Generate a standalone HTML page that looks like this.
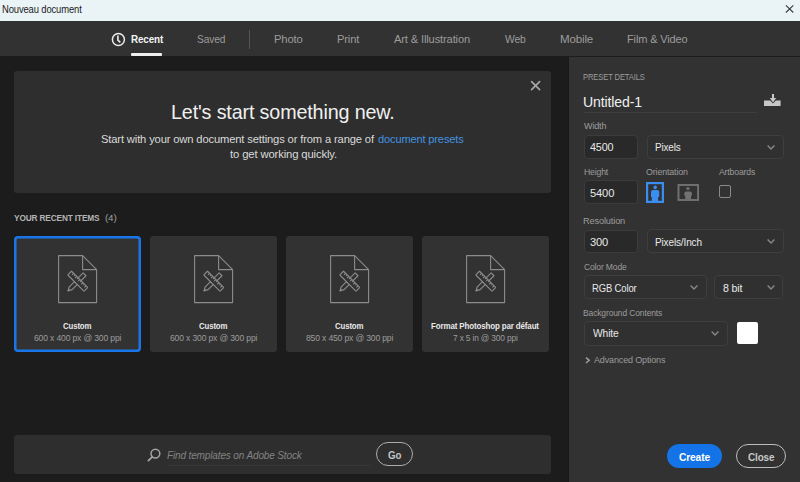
<!DOCTYPE html>
<html><head><meta charset="utf-8">
<style>
*{margin:0;padding:0;box-sizing:border-box}
html,body{width:800px;height:482px;overflow:hidden;background:#1c1c1c;font-family:"Liberation Sans",sans-serif}
.abs{position:absolute}
.t{position:absolute;white-space:nowrap;line-height:1;transform-origin:0 0}
#title{left:0;top:0;width:800px;height:21px;background:#eaf3f6}
#tabs{left:0;top:21px;width:800px;height:35px;background:#323232}
#tabline{left:0;top:56px;width:800px;height:1px;background:#1d1d1d}
#main{left:14px;top:71px;width:536.5px;height:121.8px;background:#2e2e2e;border-radius:3px}
#panel{left:569px;top:57px;width:231px;height:425px;background:#323232}
.inp{position:absolute;background:#292929;border:1px solid #3c3c3c;border-radius:4px}
.dd{position:absolute;background:#303030;border:1px solid #3e3e3e;border-radius:4px}
.card{position:absolute;top:236px;width:126.6px;height:115.6px;background:#323232;border-radius:3px}
.doc{position:absolute;top:255px}
.chev{position:absolute}
</style></head><body>
<svg width="0" height="0" style="position:absolute">
 <defs>
  <symbol id="docic" viewBox="0 0 40 49">
   <g fill="none" stroke="#8c8c8c" stroke-width="1.1" stroke-linejoin="round">
    <path d="M0.6 0.6H24.6L38.6 14.6V47.6H0.6Z"/>
    <path d="M24.6 0.6V14.6H38.6"/>
    <g transform="rotate(-45 19.7 26.2)">
     <path d="M9.8 24.2H29.4V28.2H9.8L5.9 26.2Z" fill="#323232"/>
     <path d="M7.5 25.3V27.1"/>
    </g>
    <g transform="rotate(45 19.7 26.2)">
     <rect x="8.2" y="23.5" width="23" height="5.3" rx="0.5" fill="#323232"/>
     <path d="M11.2 23.6v2.2M13.4 23.6v1.4M15.6 23.6v2.2M17.8 23.6v1.4M20 23.6v2.2M22.2 23.6v1.4M24.4 23.6v2.2M26.6 23.6v1.4M28.8 23.6v2.2"/>
    </g>
   </g>
  </symbol>
 </defs>
</svg>
<div id="title" class="abs"></div>
<svg class="abs" style="left:785px;top:4px" width="10" height="10" viewBox="0 0 10 10"><path d="M0.9 1.3L8.3 8.5M8.3 1.3L0.9 8.5" stroke="#383838" stroke-width="1.05"/></svg>
<div id="tabs" class="abs"></div>
<div id="tabline" class="abs"></div>
<svg class="abs" style="left:111px;top:32px" width="15" height="15" viewBox="0 0 15 15"><circle cx="7.4" cy="7.5" r="6.0" fill="none" stroke="#ececec" stroke-width="1.5"/><path d="M6.9 3.6V8.2L9.3 10.4" fill="none" stroke="#ececec" stroke-width="1.6"/></svg>
<div class="abs" style="left:131px;top:53px;width:31px;height:3px;background:#f0f0f0;border-radius:1px"></div>
<div class="abs" style="left:249px;top:30px;width:1px;height:19px;background:#555"></div>

<div id="main" class="abs"></div>
<svg class="abs" style="left:530px;top:80px" width="11" height="11" viewBox="0 0 11 11"><path d="M1.6 1.6L9.6 9.6M9.6 1.6L1.6 9.6" stroke="#a8a8a8" stroke-width="1.6" stroke-linecap="round"/></svg>

<div class="card" style="left:14px;box-shadow:inset 0 0 0 2.5px #1976ea;border-radius:4px"></div>
<div class="card" style="left:150px"></div>
<div class="card" style="left:286px"></div>
<div class="card" style="left:422px"></div>
<svg class="doc" style="left:58px" width="40" height="49"><use href="#docic"/></svg>
<svg class="doc" style="left:194px" width="40" height="49"><use href="#docic"/></svg>
<svg class="doc" style="left:330px" width="40" height="49"><use href="#docic"/></svg>
<svg class="doc" style="left:466px" width="40" height="49"><use href="#docic"/></svg>

<div id="bottom" class="abs" style="left:14px;top:434.6px;width:536.5px;height:39.2px;background:#2e2e2e;border-radius:3px"></div>
<svg class="abs" style="left:147px;top:447.5px" width="14" height="14" viewBox="0 0 14 14"><circle cx="8.4" cy="5.6" r="4.4" fill="none" stroke="#a4a4a4" stroke-width="1.5"/><path d="M5.2 8.8L1.4 12.6" stroke="#a4a4a4" stroke-width="1.8" stroke-linecap="round"/></svg>
<div class="abs" style="left:167px;top:465px;width:204px;height:1px;background:#373737"></div>
<div class="abs" style="left:375.7px;top:442.2px;width:37.2px;height:24px;border:1.7px solid #acacac;border-radius:12px"></div>

<div id="panel" class="abs"></div>
<div class="abs" style="left:568px;top:57px;width:1px;height:425px;background:#191919"></div>
<div class="abs" style="left:584px;top:112px;width:173px;height:1px;background:#3e3e3e"></div>
<svg class="abs" style="left:764px;top:94px" width="17" height="13" viewBox="0 0 17 13"><path d="M8 0H10V4H12.2L9 8.4L5.8 4H8Z" fill="#c8c8c8"/><path d="M0 6.6H6.2L9 9.4L11.8 6.6H16.6V12H0Z" fill="#c8c8c8"/></svg>

<div class="inp" style="left:584px;top:134.6px;width:54.2px;height:24px"></div>
<div class="dd" style="left:646.5px;top:134.5px;width:137.2px;height:24.3px"></div>
<div class="inp" style="left:583.8px;top:180.4px;width:54.1px;height:23.8px"></div>
<div class="inp" style="left:584.2px;top:229.8px;width:53.8px;height:23px"></div>
<div class="dd" style="left:646.5px;top:229.3px;width:137px;height:24.2px"></div>
<div class="dd" style="left:583.9px;top:275.1px;width:122.9px;height:23.9px"></div>
<div class="dd" style="left:714.4px;top:275.1px;width:69px;height:23.9px"></div>
<div class="dd" style="left:584px;top:321.2px;width:143.5px;height:24.4px"></div>
<div class="abs" style="left:737px;top:322.4px;width:21.2px;height:21.6px;background:#fff;border-radius:2px"></div>

<svg class="chev" style="left:767px;top:145px" width="8" height="5" viewBox="0 0 8 5"><path d="M0.6 0.6L4 4L7.4 0.6" fill="none" stroke="#888888" stroke-width="1.4"/></svg>
<svg class="chev" style="left:767px;top:239px" width="8" height="5" viewBox="0 0 8 5"><path d="M0.6 0.6L4 4L7.4 0.6" fill="none" stroke="#888888" stroke-width="1.4"/></svg>
<svg class="chev" style="left:690px;top:285px" width="8" height="5" viewBox="0 0 8 5"><path d="M0.6 0.6L4 4L7.4 0.6" fill="none" stroke="#888888" stroke-width="1.4"/></svg>
<svg class="chev" style="left:767px;top:285px" width="8" height="5" viewBox="0 0 8 5"><path d="M0.6 0.6L4 4L7.4 0.6" fill="none" stroke="#888888" stroke-width="1.4"/></svg>
<svg class="chev" style="left:711px;top:331px" width="8" height="5" viewBox="0 0 8 5"><path d="M0.6 0.6L4 4L7.4 0.6" fill="none" stroke="#888888" stroke-width="1.4"/></svg>
<svg class="chev" style="left:585px;top:357px" width="6" height="7" viewBox="0 0 6 7"><path d="M1 0.6L4.2 3.3L1 6.0" fill="none" stroke="#a0a0a0" stroke-width="1.5"/></svg>

<!-- orientation -->
<svg class="abs" style="left:646px;top:182px" width="18" height="21" viewBox="0 0 18 21"><rect x="1.1" y="1.1" width="15.8" height="18.8" fill="none" stroke="#3a8ef2" stroke-width="2.2"/><circle cx="9.2" cy="5.4" r="1.8" fill="#3a8ef2"/><path d="M5 10Q5 8 7 8H11.2Q13.2 8 13.2 10V15H12.1V20H5.8V15H5Z" fill="#3a8ef2"/></svg>
<svg class="abs" style="left:677px;top:184px" width="22" height="17" viewBox="0 0 22 17"><rect x="1.5" y="1" width="19.6" height="15" fill="none" stroke="#727272" stroke-width="1.9"/><circle cx="10.9" cy="4.5" r="1.6" fill="#727272"/><path d="M7.4 9.2Q7.4 7.4 9.2 7.4H13.1Q14.9 7.4 14.9 9.2V11.8H14V15.2H8.2V11.8H7.4Z" fill="#727272"/></svg>
<div class="abs" style="left:719px;top:185px;width:12px;height:13px;border:1.5px solid #8a8a8a;border-radius:2px"></div>

<div class="abs" style="left:667px;top:444px;width:55px;height:24px;background:#1473e6;border-radius:12px"></div>
<div class="abs" style="left:736px;top:444px;width:50px;height:24px;border:1.8px solid #bdbdbd;border-radius:12px"></div>
<div class="t" style="left:2.25px;top:4.66px;font-size:10.33px;letter-spacing:-0.150px;transform:scaleX(0.9133);font-weight:normal;font-style:normal;color:#1c1c1c">Nouveau document</div>
<div class="t" style="left:130.81px;top:33.99px;font-size:11.23px;letter-spacing:-0.150px;transform:scaleX(0.8777);font-weight:bold;font-style:normal;color:#f2f2f2">Recent</div>
<div class="t" style="left:197.19px;top:33.93px;font-size:11.30px;letter-spacing:-0.150px;transform:scaleX(0.9024);font-weight:normal;font-style:normal;color:#9c9c9c">Saved</div>
<div class="t" style="left:274.10px;top:34.36px;font-size:11.50px;letter-spacing:-0.150px;transform:scaleX(0.9776);font-weight:normal;font-style:normal;color:#9c9c9c">Photo</div>
<div class="t" style="left:336.61px;top:34.39px;font-size:11.48px;letter-spacing:-0.150px;transform:scaleX(0.9727);font-weight:normal;font-style:normal;color:#9c9c9c">Print</div>
<div class="t" style="left:394.00px;top:33.80px;font-size:11.46px;letter-spacing:-0.150px;transform:scaleX(0.9729);font-weight:normal;font-style:normal;color:#9c9c9c">Art &amp; Illustration</div>
<div class="t" style="left:505.00px;top:33.89px;font-size:11.35px;letter-spacing:-0.150px;transform:scaleX(0.9143);font-weight:normal;font-style:normal;color:#9c9c9c">Web</div>
<div class="t" style="left:559.67px;top:34.31px;font-size:11.56px;letter-spacing:-0.150px;transform:scaleX(1.0009);font-weight:normal;font-style:normal;color:#9c9c9c">Mobile</div>
<div class="t" style="left:626.62px;top:33.81px;font-size:11.45px;letter-spacing:-0.150px;transform:scaleX(0.9639);font-weight:normal;font-style:normal;color:#9c9c9c">Film &amp; Video</div>
<div class="t" style="left:170.92px;top:101.93px;font-size:20.16px;letter-spacing:-0.150px;transform:scaleX(0.9786);font-weight:normal;font-style:normal;color:#f0f0f0">Let's start something new.</div>
<div class="t" style="left:101.45px;top:133.78px;font-size:11.48px;letter-spacing:-0.150px;transform:scaleX(0.9755);font-weight:normal;font-style:normal;color:#dadada">Start with your own document settings or from a range of</div>
<div class="t" style="left:377.66px;top:133.80px;font-size:11.46px;letter-spacing:-0.150px;transform:scaleX(0.9655);font-weight:normal;font-style:normal;color:#4392e0">document presets</div>
<div class="t" style="left:229.69px;top:149.17px;font-size:11.50px;letter-spacing:-0.150px;transform:scaleX(0.9832);font-weight:normal;font-style:normal;color:#dadada">to get working quickly.</div>
<div class="t" style="left:14.12px;top:214.23px;font-size:8.59px;letter-spacing:-0.150px;transform:scaleX(0.9653);font-weight:bold;font-style:normal;color:#b4b4b4">YOUR RECENT ITEMS</div>
<div class="t" style="left:104.91px;top:213.98px;font-size:8.89px;letter-spacing:-0.150px;transform:scaleX(1.1090);font-weight:normal;font-style:normal;color:#a0a0a0">(4)</div>
<div class="t" style="left:63.19px;top:322.00px;font-size:8.51px;letter-spacing:-0.150px;transform:scaleX(0.9213);font-weight:bold;font-style:normal;color:#e8e8e8">Custom</div>
<div class="t" style="left:33.77px;top:333.59px;font-size:8.63px;letter-spacing:-0.150px;transform:scaleX(0.9923);font-weight:normal;font-style:normal;color:#9c9c9c">600 x 400 px @ 300 ppi</div>
<div class="t" style="left:199.19px;top:322.00px;font-size:8.51px;letter-spacing:-0.150px;transform:scaleX(0.9213);font-weight:bold;font-style:normal;color:#e8e8e8">Custom</div>
<div class="t" style="left:169.77px;top:333.59px;font-size:8.63px;letter-spacing:-0.150px;transform:scaleX(0.9923);font-weight:normal;font-style:normal;color:#9c9c9c">600 x 300 px @ 300 ppi</div>
<div class="t" style="left:335.19px;top:322.00px;font-size:8.51px;letter-spacing:-0.150px;transform:scaleX(0.9213);font-weight:bold;font-style:normal;color:#e8e8e8">Custom</div>
<div class="t" style="left:305.86px;top:333.60px;font-size:8.63px;letter-spacing:-0.150px;transform:scaleX(0.9915);font-weight:normal;font-style:normal;color:#9c9c9c">850 x 450 px @ 300 ppi</div>
<div class="t" style="left:431.42px;top:321.99px;font-size:8.52px;letter-spacing:-0.150px;transform:scaleX(0.9368);font-weight:bold;font-style:normal;color:#e8e8e8">Format Photoshop par défaut</div>
<div class="t" style="left:452.88px;top:334.14px;font-size:8.58px;letter-spacing:-0.150px;transform:scaleX(0.9713);font-weight:normal;font-style:normal;color:#9c9c9c">7 x 5 in @ 300 ppi</div>
<div class="t" style="left:583.39px;top:72.85px;font-size:9.04px;letter-spacing:-0.150px;transform:scaleX(0.8420);font-weight:normal;font-style:normal;color:#9c9c9c">PRESET DETAILS</div>
<div class="t" style="left:583.31px;top:94.04px;font-size:15.55px;letter-spacing:-0.150px;transform:scaleX(0.9056);font-weight:normal;font-style:normal;color:#f0f0f0">Untitled-1</div>
<div class="t" style="left:583.70px;top:121.91px;font-size:9.32px;letter-spacing:-0.150px;transform:scaleX(0.9694);font-weight:normal;font-style:normal;color:#9c9c9c">Width</div>
<div class="t" style="left:590.28px;top:142.13px;font-size:11.19px;letter-spacing:-0.150px;transform:scaleX(0.9657);font-weight:normal;font-style:normal;color:#e8e8e8">4500</div>
<div class="t" style="left:654.61px;top:142.58px;font-size:10.30px;letter-spacing:-0.150px;transform:scaleX(0.9616);font-weight:normal;font-style:normal;color:#e8e8e8">Pixels</div>
<div class="t" style="left:583.51px;top:167.78px;font-size:9.24px;letter-spacing:-0.150px;transform:scaleX(0.9354);font-weight:normal;font-style:normal;color:#9c9c9c">Height</div>
<div class="t" style="left:646.24px;top:168.05px;font-size:9.28px;letter-spacing:-0.150px;transform:scaleX(0.9585);font-weight:normal;font-style:normal;color:#9c9c9c">Orientation</div>
<div class="t" style="left:718.80px;top:168.09px;font-size:9.23px;letter-spacing:-0.150px;transform:scaleX(0.9341);font-weight:normal;font-style:normal;color:#9c9c9c">Artboards</div>
<div class="t" style="left:589.85px;top:187.87px;font-size:11.26px;letter-spacing:-0.150px;transform:scaleX(0.9901);font-weight:normal;font-style:normal;color:#e8e8e8">5400</div>
<div class="t" style="left:583.26px;top:216.99px;font-size:9.35px;letter-spacing:-0.150px;transform:scaleX(0.9871);font-weight:normal;font-style:normal;color:#9c9c9c">Resolution</div>
<div class="t" style="left:589.87px;top:236.87px;font-size:11.02px;letter-spacing:-0.150px;transform:scaleX(1.0081);font-weight:normal;font-style:normal;color:#e8e8e8">300</div>
<div class="t" style="left:654.80px;top:236.57px;font-size:10.67px;letter-spacing:-0.150px;transform:scaleX(0.9399);font-weight:normal;font-style:normal;color:#e8e8e8">Pixels/Inch</div>
<div class="t" style="left:583.57px;top:263.00px;font-size:9.21px;letter-spacing:-0.150px;transform:scaleX(0.9238);font-weight:normal;font-style:normal;color:#9c9c9c">Color Mode</div>
<div class="t" style="left:592.34px;top:282.75px;font-size:10.92px;letter-spacing:-0.150px;transform:scaleX(0.8679);font-weight:normal;font-style:normal;color:#e8e8e8">RGB Color</div>
<div class="t" style="left:723.18px;top:282.58px;font-size:11.13px;letter-spacing:-0.150px;transform:scaleX(0.9540);font-weight:normal;font-style:normal;color:#e8e8e8">8 bit</div>
<div class="t" style="left:583.32px;top:308.71px;font-size:9.21px;letter-spacing:-0.150px;transform:scaleX(0.9241);font-weight:normal;font-style:normal;color:#9c9c9c">Background Contents</div>
<div class="t" style="left:592.60px;top:328.71px;font-size:10.39px;letter-spacing:-0.150px;transform:scaleX(0.9931);font-weight:normal;font-style:normal;color:#e8e8e8">White</div>
<div class="t" style="left:594.40px;top:355.43px;font-size:9.77px;letter-spacing:-0.150px;transform:scaleX(0.9209);font-weight:normal;font-style:normal;color:#9c9c9c">Advanced Options</div>
<div class="t" style="left:678.79px;top:451.53px;font-size:10.83px;letter-spacing:-0.150px;transform:scaleX(0.9425);font-weight:bold;font-style:normal;color:#ffffff">Create</div>
<div class="t" style="left:747.60px;top:451.58px;font-size:10.78px;letter-spacing:-0.150px;transform:scaleX(0.9201);font-weight:bold;font-style:normal;color:#c8c8c8">Close</div>
<div class="t" style="left:167.00px;top:450.37px;font-size:10.67px;letter-spacing:-0.150px;transform:scaleX(0.9392);font-weight:normal;font-style:italic;color:#838383">Find templates on Adobe Stock</div>
<div class="t" style="left:387.61px;top:449.89px;font-size:10.76px;letter-spacing:-0.150px;transform:scaleX(0.9048);font-weight:bold;font-style:normal;color:#c4c4c4">Go</div>
</body></html>
